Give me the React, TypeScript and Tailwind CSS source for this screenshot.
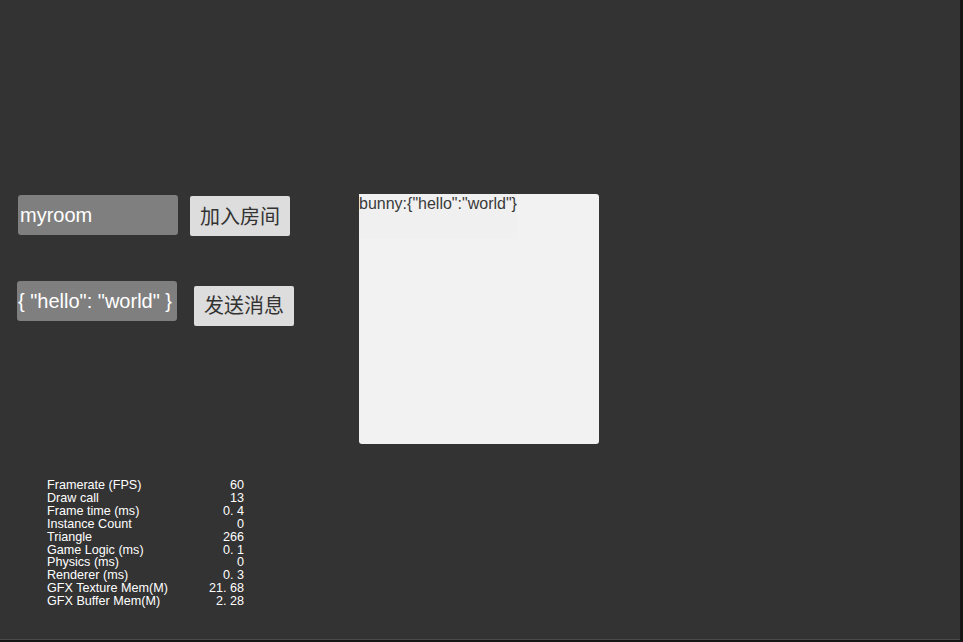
const stats: [string, string][] = [
  ['Framerate (FPS)', '60'],
  ['Draw call', '13'],
  ['Frame time (ms)', '0. 4'],
  ['Instance Count', '0'],
  ['Triangle', '266'],
  ['Game Logic (ms)', '0. 1'],
  ['Physics (ms)', '0'],
  ['Renderer (ms)', '0. 3'],
  ['GFX Texture Mem(M)', '21. 68'],
  ['GFX Buffer Mem(M)', '2. 28'],
]

const font = { fontFamily: '"Liberation Sans", "Noto Sans CJK SC", Arial, sans-serif' }

export default function App() {
  return (
    <div className="w-[963px] h-[642px] bg-[#161616] overflow-hidden" style={font}>
      <div className="w-[960px] h-[640px] bg-[#333333] border-b border-[#4a4a4a] pt-[194px]">
        {/* top row: controls + message panel */}
        <div className="flex">
          <div className="w-[359px] shrink-0">
            <div className="flex items-start">
              <div className="ml-[18px] mt-[1px] w-[160px] h-[40px] rounded-[3px] bg-[#7f7f7f] flex items-center pl-[2px] text-white text-[20px] leading-none">
                myroom
              </div>
              <button className="ml-[12px] mt-[2px] w-[100px] h-[40px] rounded-[2px] bg-[#dddddd] text-[#333] text-[20px] leading-none flex items-center justify-center pt-[1px]">
                加入房间
              </button>
            </div>
            <div className="flex items-start mt-[45px]">
              <div className="ml-[17px] w-[160px] h-[40px] rounded-[3px] bg-[#7f7f7f] flex items-center pl-[1px] text-white text-[20px] leading-none whitespace-nowrap">
                {'{ "hello": "world" }'}
              </div>
              <button className="ml-[17px] mt-[5px] w-[100px] h-[40px] rounded-[2px] bg-[#dddddd] text-[#333] text-[20px] leading-none flex items-center justify-center">
                发送消息
              </button>
            </div>
          </div>
          <div className="w-[240px] h-[250px] rounded-[3px] bg-[#f2f2f2]">
            <div className="w-[158px] h-[45px] bg-[#f0f0f0] text-[#3a3a3a] text-[16px] leading-[18px] pt-[1px] whitespace-nowrap">
              {'bunny:{"hello":"world"}'}
            </div>
          </div>
        </div>

        {/* stats overlay */}
        <div className="ml-[47px] mt-[35px] w-[197px] text-white text-[12.6px] leading-[12.9px]">
          {stats.map(([label, value]) => (
            <div key={label} className="flex justify-between">
              <span>{label}</span>
              <span>{value}</span>
            </div>
          ))}
        </div>
      </div>
    </div>
  )
}
